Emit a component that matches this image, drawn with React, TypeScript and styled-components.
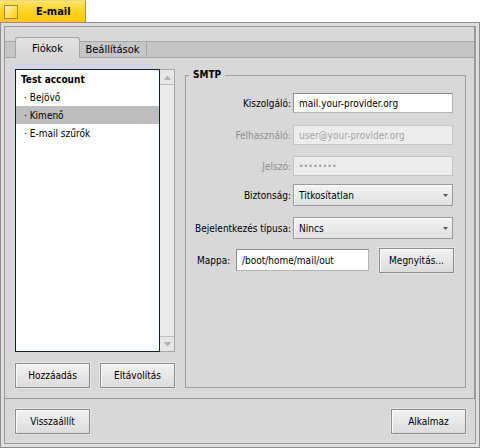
import React from "react";
import styled, { createGlobalStyle, css } from "styled-components";

const GlobalStyle = createGlobalStyle`
  html, body { margin: 0; padding: 0; background: #ffffff; }
  body {
    font-family: "DejaVu Sans Condensed", "DejaVu Sans", sans-serif;
    font-stretch: condensed;
    font-size: 10px;
    color: #000;
  }
  * { box-sizing: border-box; }
`;

const Screen = styled.div`
  width: 480px;
  height: 448px;
  display: flex;
  flex-direction: column;
`;

const TitleTab = styled.div`
  width: 86px;
  height: 22px;
  flex: none;
  display: flex;
  align-items: center;
  padding-left: 4px;
  background: linear-gradient(180deg, #ffe46a 0%, #ffd21c 50%, #ffcb00 100%);
  border-right: 1px solid #a89448;
  border-top: 1px solid #f0d878;
`;

const CloseBox = styled.div`
  width: 14px;
  height: 14px;
  flex: none;
  border: 1px solid #a08a40;
  background: linear-gradient(135deg, #fff6c8 0%, #ffe06a 45%, #ffcb00 100%);
`;

const TitleText = styled.span`
  margin-left: 18px;
  font-weight: bold;
  font-size: 11px;
  color: #000;
`;

const Frame = styled.div`
  flex: 1;
  display: flex;
  border: 1px solid #8e8e8e;
  padding: 3px;
  background: #dedede;
`;

const Inner = styled.div`
  flex: 1;
  display: flex;
  flex-direction: column;
  border: 1px solid #9a9a9a;
  background: #d8d8d8;
`;

const TabView = styled.div`
  height: 372px;
  flex: none;
  display: flex;
  flex-direction: column;
  border-bottom: 1px solid #999;
  border-right: 1px solid #999;
`;

const TabBar = styled.div`
  margin-top: 14px;
  height: 17px;
  flex: none;
  display: flex;
  align-items: flex-start;
  padding-left: 10px;
  background: #c6c6c6;
  border-top: 1px solid #a6a6a6;
  border-bottom: 1px solid #a6a6a6;
`;

const Tab = styled.div<{ $active?: boolean }>`
  display: flex;
  align-items: center;
  justify-content: center;
  color: #000;
  font-size: 11px;
  ${(p) =>
    p.$active
      ? css`
          width: 65px;
          height: 21px;
          margin-top: -5px;
          padding-top: 1px;
          background: linear-gradient(180deg, #e2e2e2 0%, #d8d8d8 100%);
          border: 1px solid #a6a6a6;
          border-bottom: none;
          border-radius: 3px 3px 0 0;
        `
      : css`
          width: 68px;
          height: 15px;
          margin-left: -1px;
          border-right: 1px solid #a6a6a6;
        `}
`;

const TabBody = styled.div`
  flex: 1;
  display: flex;
  gap: 10px;
  padding: 11px 8px 10px 10px;
`;

const LeftCol = styled.div`
  width: 160px;
  flex: none;
  display: flex;
  flex-direction: column;
`;

const ListFrame = styled.div`
  height: 283px;
  display: flex;
`;

const List = styled.div`
  flex: 1;
  border: 1px solid #0000e6;
  background: #fff;
  display: flex;
  flex-direction: column;
`;

const ListItem = styled.div<{ $selected?: boolean; $bold?: boolean }>`
  height: 18px;
  display: flex;
  align-items: center;
  padding-left: ${(p) => (p.$bold ? "5px" : "8px")};
  font-weight: ${(p) => (p.$bold ? "bold" : "normal")};
  background: ${(p) => (p.$selected ? "#bdbdbd" : "transparent")};
`;

const ScrollBar = styled.div`
  width: 15px;
  flex: none;
  display: flex;
  flex-direction: column;
  background: #ebebeb;
  border: 1px solid #a6a6a6;
  border-left: none;
`;

const ScrollArrow = styled.div<{ $down?: boolean }>`
  height: 15px;
  flex: none;
  display: flex;
  align-items: center;
  justify-content: center;
  background: #e6e6e6;
  ${(p) =>
    p.$down
      ? css`
          margin-top: auto;
          border-top: 1px solid #bdbdbd;
        `
      : css`
          border-bottom: 1px solid #bdbdbd;
        `}
`;

const ButtonRow = styled.div`
  display: flex;
  gap: 10px;
  margin-top: 11px;
`;

const Button = styled.button`
  width: 75px;
  height: 25px;
  flex: none;
  padding: 0;
  font: inherit;
  color: #000;
  border: 1px solid #8c8c8c;
  border-radius: 0;
  background: linear-gradient(180deg, #f2f2f2 0%, #e6e6e6 55%, #dcdcdc 100%);
  box-shadow: inset 1px 1px 0 #fafafa, 0 0 0 1px #e4e4e4;
`;

const GroupBox = styled.fieldset`
  flex: 1;
  margin: 0;
  padding: 0 10px 0 0;
  border: 1px solid #9e9e9e;
  min-width: 0;
  display: flex;
  flex-direction: column;
`;

const Legend = styled.legend`
  margin-left: 3px;
  padding: 0 4px;
  font-weight: bold;
  line-height: 12px;
`;

const FormRow = styled.div<{ $mt: number; $h: number }>`
  display: grid;
  grid-template-columns: 105px 160px;
  column-gap: 2px;
  align-items: center;
  height: ${(p) => p.$h}px;
  margin-top: ${(p) => p.$mt}px;
`;

const Label = styled.label<{ $disabled?: boolean }>`
  text-align: right;
  white-space: nowrap;
  color: ${(p) => (p.$disabled ? "#8e8e8e" : "#000")};
`;

const TextField = styled.div<{ $disabled?: boolean; $w?: number }>`
  height: 100%;
  width: ${(p) => (p.$w ? `${p.$w}px` : "auto")};
  display: flex;
  align-items: center;
  padding-left: 5px;
  white-space: nowrap;
  overflow: hidden;
  ${(p) =>
    p.$disabled
      ? css`
          background: #ececec;
          border: 1px solid #c4c4c4;
          color: #a6a6a6;
        `
      : css`
          background: #ffffff;
          border: 1px solid #8e8e8e;
          border-right-color: #b4b4b4;
          border-bottom-color: #b4b4b4;
          color: #000;
        `}
`;

const Dots = styled.span`
  font-size: 8px;
  letter-spacing: 0.5px;
  color: #9a9a9a;
`;

const MenuField = styled.div`
  height: 100%;
  display: flex;
  align-items: center;
  padding-left: 5px;
  border: 1px solid #9a9a9a;
  background: linear-gradient(180deg, #f3f3f3 0%, #e8e8e8 60%, #e0e0e0 100%);
  box-shadow: inset 1px 1px 0 #fbfbfb;
`;

const MenuText = styled.span`
  flex: 1;
`;

const MenuArrow = styled.div`
  width: 14px;
  height: 100%;
  display: flex;
  align-items: center;
  justify-content: center;
`;

const FolderRow = styled.div`
  display: flex;
  align-items: center;
  height: 24px;
  margin-top: 9px;
  padding-left: 11px;
`;

const FolderLabel = styled.span`
  width: 39px;
  flex: none;
`;

const FolderField = styled(TextField)`
  height: 22px;
  margin-right: 10px;
`;

const BottomBar = styled.div`
  flex: 1;
  display: flex;
  justify-content: space-between;
  align-items: flex-start;
  padding: 10px 9px 0 10px;
`;

const Triangle = ({ down }: { down?: boolean }) => (
  <svg width="7" height="5" viewBox="0 0 7 5">
    <path
      d={down ? "M0.5 0.5 L3.5 4 L6.5 0.5 Z" : "M0.5 4.5 L3.5 1 L6.5 4.5 Z"}
      fill="#a9b2c4"
      stroke="#9aa0aa"
      strokeWidth="0.5"
    />
  </svg>
);

const MenuTriangle = () => (
  <svg width="5" height="3" viewBox="0 0 5 3">
    <path d="M0 0 L5 0 L2.5 3 Z" fill="#555" />
  </svg>
);

export default function App() {
  return (
    <>
      <GlobalStyle />
      <Screen>
        <TitleTab>
          <CloseBox />
          <TitleText>E-mail</TitleText>
        </TitleTab>
        <Frame>
          <Inner>
            <TabView>
              <TabBar>
                <Tab $active>Fiókok</Tab>
                <Tab>Beállítások</Tab>
              </TabBar>
              <TabBody>
                <LeftCol>
                  <ListFrame>
                    <List>
                      <ListItem $bold>Test account</ListItem>
                      <ListItem>· Bejövő</ListItem>
                      <ListItem $selected>· Kimenő</ListItem>
                      <ListItem>· E-mail szűrők</ListItem>
                    </List>
                    <ScrollBar>
                      <ScrollArrow>
                        <Triangle />
                      </ScrollArrow>
                      <ScrollArrow $down>
                        <Triangle down />
                      </ScrollArrow>
                    </ScrollBar>
                  </ListFrame>
                  <ButtonRow>
                    <Button>Hozzáadás</Button>
                    <Button>Eltávolítás</Button>
                  </ButtonRow>
                </LeftCol>
                <GroupBox>
                  <Legend>SMTP</Legend>
                  <FormRow $mt={12} $h={20}>
                    <Label>Kiszolgáló:</Label>
                    <TextField>mail.your-provider.org</TextField>
                  </FormRow>
                  <FormRow $mt={12} $h={20}>
                    <Label $disabled>Felhasználó:</Label>
                    <TextField $disabled>user@your-provider.org</TextField>
                  </FormRow>
                  <FormRow $mt={11} $h={20}>
                    <Label $disabled>Jelszó:</Label>
                    <TextField $disabled>
                      <Dots>••••••••</Dots>
                    </TextField>
                  </FormRow>
                  <FormRow $mt={8} $h={22}>
                    <Label>Biztonság:</Label>
                    <MenuField>
                      <MenuText>Titkosítatlan</MenuText>
                      <MenuArrow>
                        <MenuTriangle />
                      </MenuArrow>
                    </MenuField>
                  </FormRow>
                  <FormRow $mt={11} $h={22}>
                    <Label>Bejelentkezés típusa:</Label>
                    <MenuField>
                      <MenuText>Nincs</MenuText>
                      <MenuArrow>
                        <MenuTriangle />
                      </MenuArrow>
                    </MenuField>
                  </FormRow>
                  <FolderRow>
                    <FolderLabel>Mappa:</FolderLabel>
                    <FolderField $w={133}>/boot/home/mail/out</FolderField>
                    <Button>Megnyitás...</Button>
                  </FolderRow>
                </GroupBox>
              </TabBody>
            </TabView>
            <BottomBar>
              <Button>Visszaállít</Button>
              <Button>Alkalmaz</Button>
            </BottomBar>
          </Inner>
        </Frame>
      </Screen>
    </>
  );
}
